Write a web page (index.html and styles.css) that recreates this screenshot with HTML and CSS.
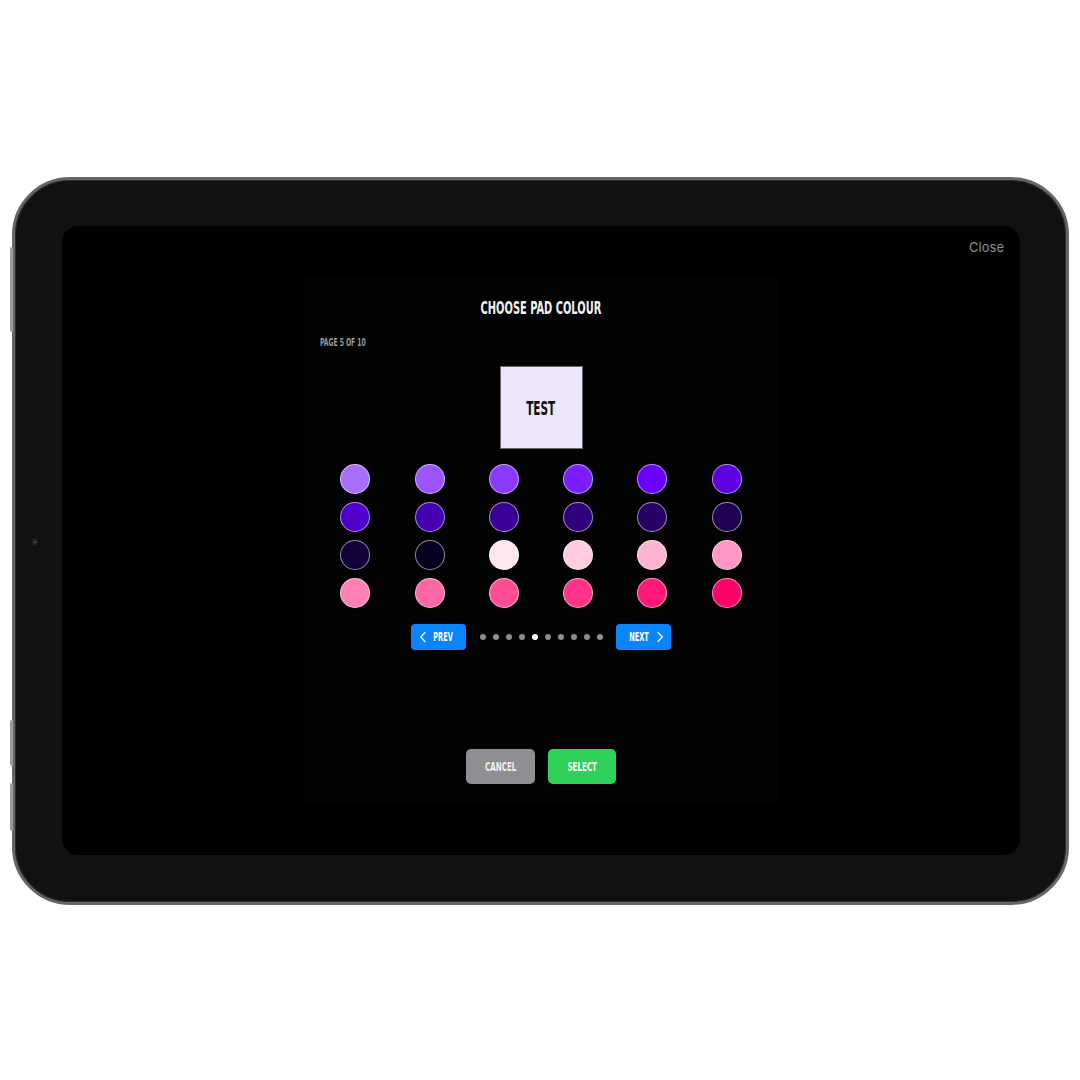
FILE: index.html
```html
<!DOCTYPE html>
<html>
<head>
<meta charset="utf-8">
<link rel="stylesheet" href="styles.css">
</head>
<body>
<div class="stage">
  <div class="tablet">
    <span class="btn-side btn-top"></span>
    <span class="btn-side btn-vol1"></span>
    <span class="btn-side btn-vol2"></span>
    <span class="camera"></span>
    <div class="screen">
      <div class="close">Close</div>
      <div class="panel">
        <h1 class="title"><span class="cond">CHOOSE PAD COLOUR</span></h1>
        <div class="page-label"><span class="cond">PAGE 5 OF 10</span></div>
        <div class="swatch"><span class="cond">TEST</span></div>
        <div class="grid">
          <span class="dot" style="background:#a86eff"></span>
          <span class="dot" style="background:#9b55ff"></span>
          <span class="dot" style="background:#8a3bff"></span>
          <span class="dot" style="background:#7a1fff"></span>
          <span class="dot" style="background:#6a00ff"></span>
          <span class="dot" style="background:#5c00e0"></span>
          <span class="dot" style="background:#5000cc"></span>
          <span class="dot" style="background:#4400b0"></span>
          <span class="dot" style="background:#3a0096"></span>
          <span class="dot" style="background:#30007c"></span>
          <span class="dot" style="background:#280066"></span>
          <span class="dot" style="background:#200050"></span>
          <span class="dot" style="background:#12003a"></span>
          <span class="dot" style="background:#050020"></span>
          <span class="dot" style="background:#ffe6f0"></span>
          <span class="dot" style="background:#ffcce1"></span>
          <span class="dot" style="background:#ffb3d2"></span>
          <span class="dot" style="background:#ff99c4"></span>
          <span class="dot" style="background:#ff80b5"></span>
          <span class="dot" style="background:#ff66a6"></span>
          <span class="dot" style="background:#ff4d97"></span>
          <span class="dot" style="background:#ff3388"></span>
          <span class="dot" style="background:#ff1a7a"></span>
          <span class="dot" style="background:#ff006b"></span>
        </div>
        <div class="pager">
          <button class="nav-btn">
            <svg width="8" height="12" viewBox="0 0 8 12"><path d="M6 1.5 L1.8 6 L6 10.5" fill="none" stroke="#fff" stroke-width="1.3" stroke-linecap="round" stroke-linejoin="round"/></svg>
            <span class="cond">PREV</span>
          </button>
          <div class="dots">
            <span class="pdot"></span><span class="pdot"></span><span class="pdot"></span><span class="pdot"></span>
            <span class="pdot active"></span>
            <span class="pdot"></span><span class="pdot"></span><span class="pdot"></span><span class="pdot"></span><span class="pdot"></span>
          </div>
          <button class="nav-btn">
            <span class="cond">NEXT</span>
            <svg width="8" height="12" viewBox="0 0 8 12"><path d="M2 1.5 L6.2 6 L2 10.5" fill="none" stroke="#fff" stroke-width="1.3" stroke-linecap="round" stroke-linejoin="round"/></svg>
          </button>
        </div>
        <div class="actions">
          <button class="act cancel"><span class="cond">CANCEL</span></button>
          <button class="act select"><span class="cond">SELECT</span></button>
        </div>
      </div>
    </div>
  </div>
</div>
</body>
</html>
```
FILE: styles.css
```css
* { box-sizing: border-box; }
html, body { margin: 0; padding: 0; background: #ffffff; }
body { width: 1080px; height: 1080px; font-family: "DejaVu Sans Condensed", "Liberation Sans Narrow", "Liberation Sans", sans-serif; }

.stage {
  width: 1080px;
  height: 1080px;
  padding: 177px 11px 175px 12px;
}

.tablet {
  position: relative;
  width: 1057px;
  height: 728px;
  border-radius: 58px;
  background: #111111;
  border: 3px solid #666666;
  box-shadow: inset 0 0 0 1px #2e2e2e;
  padding: 46px 46px 47px 47px;
}

.btn-side {
  position: absolute;
  left: -5px;
  width: 3px;
  background: #9a9a9a;
  border-radius: 2px 0 0 2px;
}
.btn-top { top: 67px; height: 85px; }
.btn-vol1 { top: 540px; height: 46px; }
.btn-vol2 { top: 603px; height: 48px; }

.camera {
  position: absolute;
  left: 16px;
  top: 358px;
  width: 8px;
  height: 8px;
  border-radius: 50%;
  background: #1e1e1e;
  box-shadow: 0 0 0 1px #0a0a0a;
}
.camera::after {
  content: "";
  position: absolute;
  left: 3px; top: 3px;
  width: 2px; height: 2px;
  background: #5a5a5a;
  border-radius: 50%;
}

.screen {
  position: relative;
  width: 958px;
  height: 629px;
  background: #000;
  border-radius: 16px;
  display: flex;
  align-items: center;
  justify-content: center;
}

.close {
  position: absolute;
  top: 13px;
  right: 16px;
  font-family: Inter, "Liberation Sans", sans-serif;
  font-size: 13px;
  color: #8e8e93;
}

.panel {
  width: 479px;
  height: 529px;
  background: #020202;
  padding: 22px 0 21px;
  display: flex;
  flex-direction: column;
  align-items: center;
}

.cond {
  display: inline-block;
  transform: scaleX(0.61);
  transform-origin: center;
  white-space: nowrap;
}

.title {
  margin: 0;
  height: 20px;
  line-height: 20px;
  font-size: 18px;
  font-weight: 700;
  color: #f2f2f2;
}

.page-label {
  align-self: flex-start;
  margin: 19px 0 0 18px;
  height: 12px;
  line-height: 12px;
  font-size: 11px;
  font-weight: 700;
  color: #9a9a9a;
}
.page-label .cond { transform-origin: left center; }

.swatch {
  margin-top: 17px;
  width: 83px;
  height: 83px;
  background: #eee6fd;
  border: 1px solid #6a6a6a;
  display: flex;
  align-items: center;
  justify-content: center;
  font-size: 19px;
  font-weight: 700;
  color: #111;
}

.grid {
  margin-top: 15px;
  display: grid;
  grid-template-columns: repeat(6, 74.3px);
  grid-auto-rows: 30px;
  row-gap: 8px;
  justify-items: center;
}

.dot {
  width: 30px;
  height: 30px;
  border-radius: 50%;
  border: 1px solid rgba(255, 255, 255, 0.55);
}

.pager {
  margin-top: 16px;
  display: flex;
  align-items: center;
}

.nav-btn {
  width: 55px;
  height: 26px;
  border: 0;
  border-radius: 4px;
  background: #0a84ff;
  color: #fff;
  font-family: inherit;
  font-size: 12px;
  font-weight: 700;
  display: flex;
  align-items: center;
  justify-content: center;
  gap: 0;
  padding: 0;
}

.dots {
  display: flex;
  gap: 7px;
  margin: 0 13px 0 14px;
}

.pdot {
  width: 6px;
  height: 6px;
  border-radius: 50%;
  background: #8e8e8e;
}
.pdot.active { background: #ffffff; }

.actions {
  margin-top: 99px;
  display: flex;
  gap: 13px;
}

.act {
  height: 35px;
  border: 0;
  border-radius: 5px;
  color: #fff;
  font-family: inherit;
  font-size: 13px;
  font-weight: 700;
  padding: 0;
}
.cancel { width: 69px; background: #8e8e93; color: #f0f0f0; }
.select { width: 68px; background: #30d158; }
```
